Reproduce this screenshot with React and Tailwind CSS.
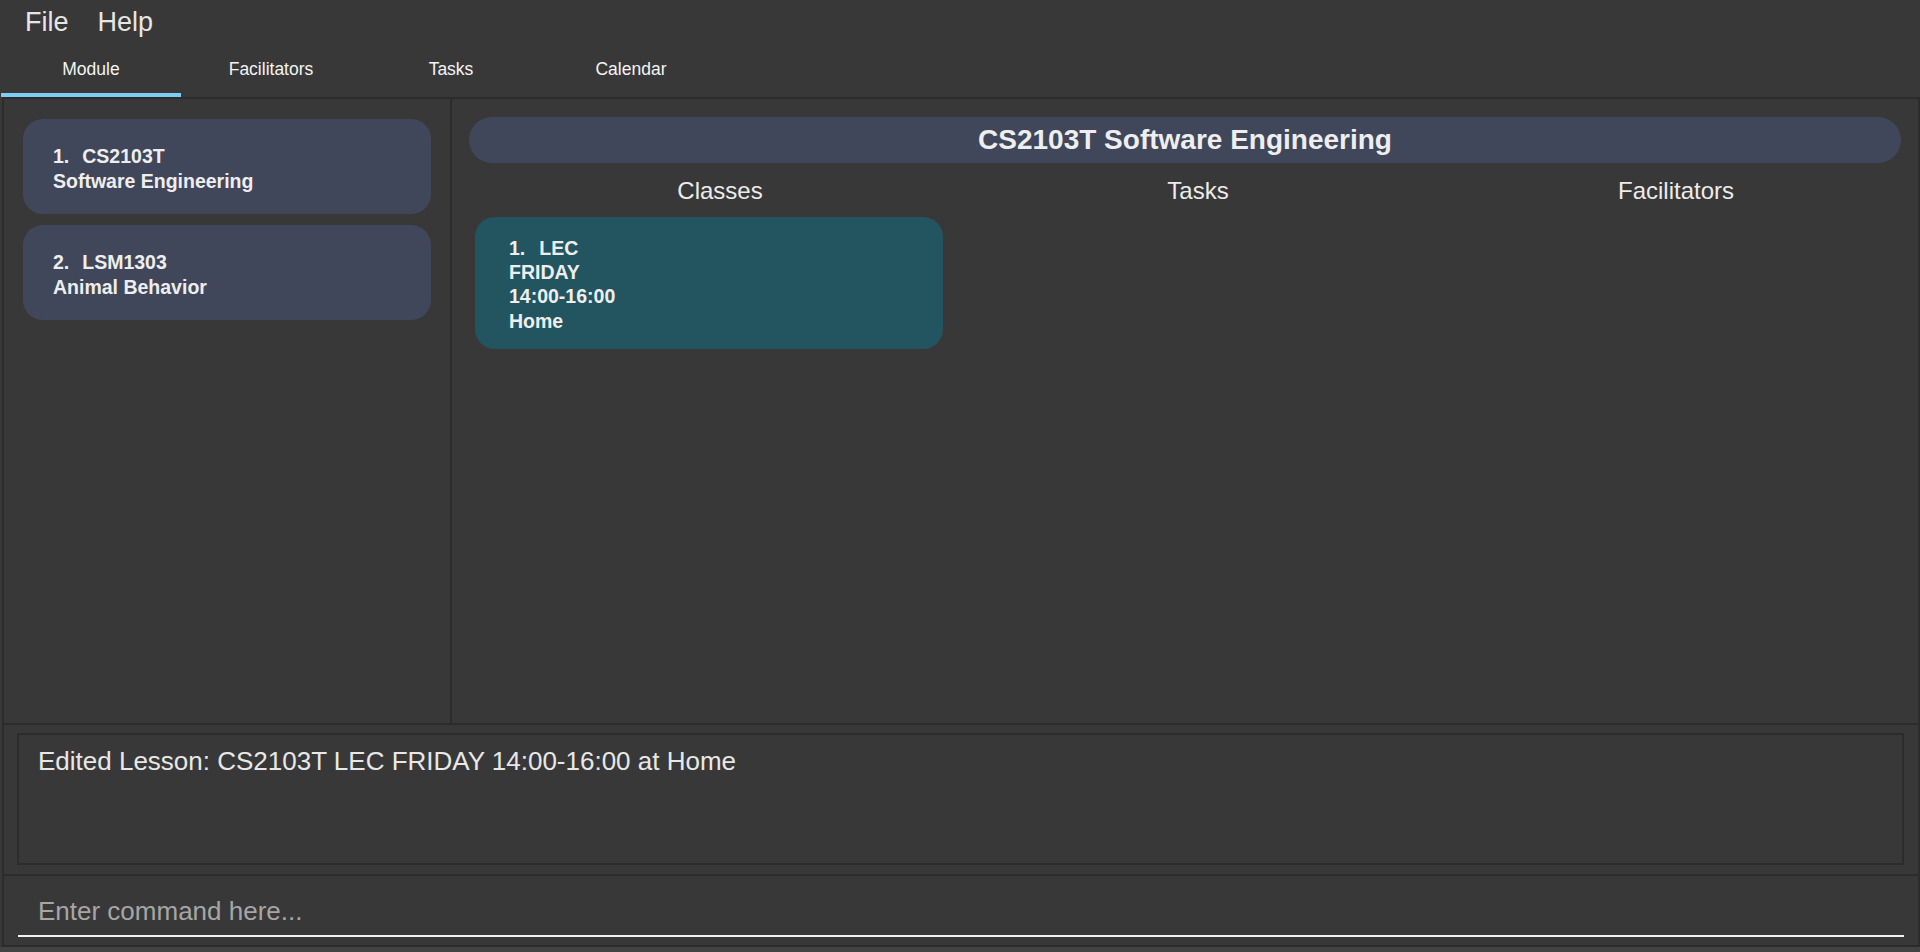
import React from "react";

const modules = [
  { idx: "1.", code: "CS2103T", name: "Software Engineering" },
  { idx: "2.", code: "LSM1303", name: "Animal Behavior" },
];

export default function App() {
  return (
    <div className="w-[1920px] h-[952px] bg-[#383838] flex flex-col overflow-hidden font-['Liberation_Sans',Arial,sans-serif] text-[#ececec]">
      {/* Menu bar */}
      <div className="h-[44px] shrink-0 flex items-start pt-[7px] pl-[25px] gap-[29px] text-[27px] leading-[30px] text-[#e6e6e6]">
        <span>File</span>
        <span>Help</span>
      </div>

      {/* Tabs */}
      <div className="h-[53px] shrink-0 flex pl-[1px] text-[17.5px] leading-[20px] text-[#f4f4f4]">
        {["Module", "Facilitators", "Tasks", "Calendar"].map((t, i) => (
          <div key={t} className="w-[180px] flex flex-col">
            <div className="flex-1 pt-[15px] text-center">{t}</div>
            <div className={i === 0 ? "h-[4px] bg-[#7ccff2]" : "h-[4px]"} />
          </div>
        ))}
      </div>

      {/* Main */}
      <div className="h-[628px] shrink-0 flex ml-[2px] border-2 border-[#2c2c2c]">
        {/* Left list */}
        <div className="w-[448px] shrink-0 border-r-2 border-[#2c2c2c] pt-[20px] px-[19px] flex flex-col gap-[11px]">
          {modules.map((m) => (
            <div
              key={m.code}
              className="w-[408px] rounded-[20px] bg-[#41475a] pl-[30px] pt-[25px] pb-[21px] font-bold text-[19.5px] leading-[24.5px] text-[#eeeeee]"
            >
              <div>
                <span>{m.idx}</span>
                <span className="ml-[13px]">{m.code}</span>
              </div>
              <div>{m.name}</div>
            </div>
          ))}
        </div>

        {/* Right detail */}
        <div className="flex-1 flex flex-col pt-[18px]">
          <div className="mx-[17px] h-[46px] rounded-full bg-[#41475a] flex items-center justify-center font-bold text-[28px] text-[#eeeeee]">
            CS2103T Software Engineering
          </div>
          <div className="grid grid-cols-3 ml-[23px] mr-[9px] mt-[14px]">
            <div className="flex flex-col">
              <div className="pl-[12px] text-center text-[24px] leading-[27px] text-[#ececec]">Classes</div>
              <div className="mt-[13px] w-[468px] rounded-[20px] bg-[#235561] pl-[34px] pt-[19px] pb-[16px] font-bold text-[19.5px] leading-[24.2px] text-[#eeeeee]">
                <div>
                  <span>1.</span>
                  <span className="ml-[14px]">LEC</span>
                </div>
                <div>FRIDAY</div>
                <div>14:00-16:00</div>
                <div>Home</div>
              </div>
            </div>
            <div className="pl-[12px] text-center text-[24px] leading-[27px] text-[#ececec]">Tasks</div>
            <div className="pl-[12px] text-center text-[24px] leading-[27px] text-[#ececec]">Facilitators</div>
          </div>
        </div>
      </div>

      {/* Result display */}
      <div className="h-[151px] shrink-0 ml-[2px] border-l-2 border-r-2 border-b-2 border-[#2c2c2c] pt-[8px] pl-[13px] pr-[14px]">
        <div className="h-[132px] border-2 border-[#2c2c2c] pl-[19px] pt-[11px] text-[26px] leading-[30px] text-[#e8e8e8]">
          Edited Lesson: CS2103T LEC FRIDAY 14:00-16:00 at Home
        </div>
      </div>

      {/* Command box */}
      <div className="h-[71px] shrink-0 ml-[2px] border-l-2 border-r-2 border-b-2 border-[#2c2c2c] pt-[20px] pl-[14px] pr-[14px]">
        <input
          type="text"
          placeholder="Enter command here..."
          className="block w-full h-[41px] box-border bg-transparent outline-none border-0 border-b-2 border-[#f2f2f2] pb-[9px] pl-[20px] text-[26px] leading-[30px] text-[#e8e8e8] placeholder:text-[#a6a6a6] font-['Liberation_Sans',Arial,sans-serif]"
        />
      </div>

      <div className="flex-1 bg-[#434343]" />
    </div>
  );
}
